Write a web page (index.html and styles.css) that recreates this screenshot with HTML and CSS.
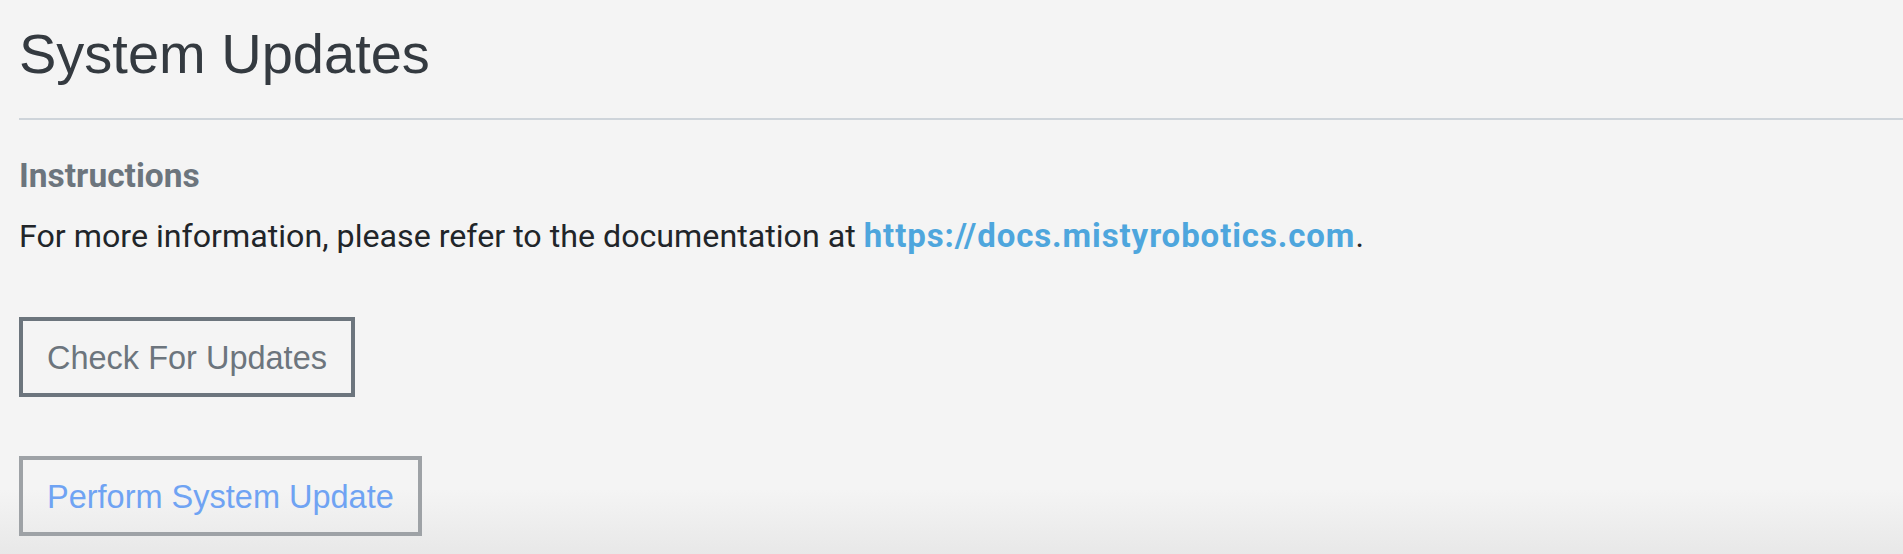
FILE: index.html
```html
<!DOCTYPE html>
<html lang="en">
<head>
<meta charset="utf-8">
<title>System Updates</title>
<link rel="stylesheet" href="styles.css">
</head>
<body>
<main class="page">
  <h1 class="title">System Updates</h1>
  <hr class="rule">
  <section class="instructions">
    <h2 class="instructions-heading">Instructions</h2>
    <p class="instructions-text">For more information, please refer to the documentation at <a class="doc-link" href="#">https://docs.mistyrobotics.com</a>.</p>
  </section>
  <div class="actions">
    <button class="btn btn-check" type="button">Check For Updates</button>
    <button class="btn btn-perform" type="button" disabled>Perform System Update</button>
  </div>
</main>
</body>
</html>
```

FILE: styles.css
```css
html {
  height: 100%;
  background: linear-gradient(to bottom, #f4f4f4 0, #f4f4f4 490px, #e8e8e8 554px);
}

body {
  margin: 0;
  min-height: 100%;
  font-family: "Liberation Sans", Arial, sans-serif;
  color: #212529;
}

.page {
  padding-left: 19px;
  display: flex;
  flex-direction: column;
}

.title {
  margin: 20px 0 0 0;
  font-size: 56px;
  line-height: 1.2;
  font-weight: 400;
  color: #343a40;
}

.rule {
  margin: 31px 0 0 0;
  border: 0;
  border-top: 2px solid #ced4da;
  height: 0;
}

.instructions {
  font-family: Roboto, "Liberation Sans", sans-serif;
  font-size: 32.2px;
  line-height: 49.5px;
}

.instructions-heading {
  margin: 31px 0 0 0;
  font-size: 33.5px;
  line-height: 49.5px;
  font-weight: 700;
  color: #6c757d;
}

.instructions-text {
  margin: 10px 0 0 0;
  color: #212529;
}

.doc-link {
  color: #4ea6dd;
  font-size: 33px;
  font-weight: 700;
  letter-spacing: 0.9px;
  text-decoration: none;
}

.actions {
  display: flex;
  flex-direction: column;
  align-items: flex-start;
  gap: 59px;
  margin-top: 56px;
}

.btn {
  font-family: "Liberation Sans", Arial, sans-serif;
  font-size: 32.5px;
  line-height: 48px;
  padding: 13px 24px 11px;
  background: transparent;
  border: 4px solid #6c757d;
  border-radius: 0;
  color: #6c757d;
}

.btn-perform {
  border-color: #9ea2a6;
  color: #6fa3f3;
}
```
